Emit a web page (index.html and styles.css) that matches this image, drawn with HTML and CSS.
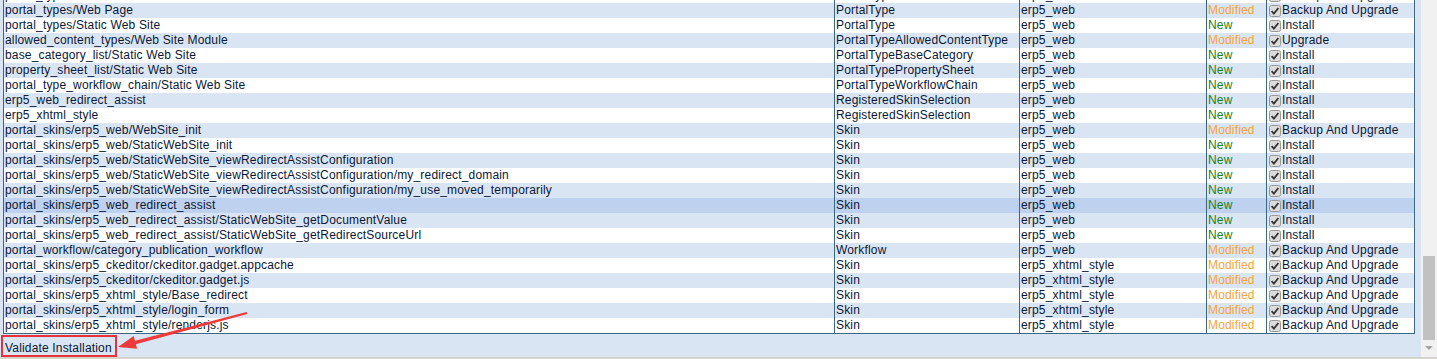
FILE: index.html
```html
<!DOCTYPE html>
<html>
<head>
<meta charset="utf-8">
<title>Business Template Installation</title>
<link rel="stylesheet" href="styles.css">
</head>
<body>
<div class="page">
  <div class="content">
    <table class="bt-table">
      <colgroup>
        <col class="c-path"><col class="c-type"><col class="c-bt"><col class="c-state"><col class="c-action">
      </colgroup>
      <tbody>
        <tr><td>portal_types/Web Site</td><td>PortalType</td><td>erp5_web</td><td class="mod">Modified</td><td><svg class="cb" viewBox="0 0 12 12"><rect x="0.5" y="0.5" width="11" height="11" rx="2"/><path d="M2.6 6.2 L4.9 8.6 L9.4 3"/></svg>Backup And Upgrade</td></tr>
        <tr class="alt"><td>portal_types/Web Page</td><td>PortalType</td><td>erp5_web</td><td class="mod">Modified</td><td><svg class="cb" viewBox="0 0 12 12"><rect x="0.5" y="0.5" width="11" height="11" rx="2"/><path d="M2.6 6.2 L4.9 8.6 L9.4 3"/></svg>Backup And Upgrade</td></tr>
        <tr><td>portal_types/Static Web Site</td><td>PortalType</td><td>erp5_web</td><td class="new">New</td><td><svg class="cb" viewBox="0 0 12 12"><rect x="0.5" y="0.5" width="11" height="11" rx="2"/><path d="M2.6 6.2 L4.9 8.6 L9.4 3"/></svg>Install</td></tr>
        <tr class="alt"><td>allowed_content_types/Web Site Module</td><td>PortalTypeAllowedContentType</td><td>erp5_web</td><td class="mod">Modified</td><td><svg class="cb" viewBox="0 0 12 12"><rect x="0.5" y="0.5" width="11" height="11" rx="2"/><path d="M2.6 6.2 L4.9 8.6 L9.4 3"/></svg>Upgrade</td></tr>
        <tr><td>base_category_list/Static Web Site</td><td>PortalTypeBaseCategory</td><td>erp5_web</td><td class="new">New</td><td><svg class="cb" viewBox="0 0 12 12"><rect x="0.5" y="0.5" width="11" height="11" rx="2"/><path d="M2.6 6.2 L4.9 8.6 L9.4 3"/></svg>Install</td></tr>
        <tr class="alt"><td>property_sheet_list/Static Web Site</td><td>PortalTypePropertySheet</td><td>erp5_web</td><td class="new">New</td><td><svg class="cb" viewBox="0 0 12 12"><rect x="0.5" y="0.5" width="11" height="11" rx="2"/><path d="M2.6 6.2 L4.9 8.6 L9.4 3"/></svg>Install</td></tr>
        <tr><td>portal_type_workflow_chain/Static Web Site</td><td>PortalTypeWorkflowChain</td><td>erp5_web</td><td class="new">New</td><td><svg class="cb" viewBox="0 0 12 12"><rect x="0.5" y="0.5" width="11" height="11" rx="2"/><path d="M2.6 6.2 L4.9 8.6 L9.4 3"/></svg>Install</td></tr>
        <tr class="alt"><td>erp5_web_redirect_assist</td><td>RegisteredSkinSelection</td><td>erp5_web</td><td class="new">New</td><td><svg class="cb" viewBox="0 0 12 12"><rect x="0.5" y="0.5" width="11" height="11" rx="2"/><path d="M2.6 6.2 L4.9 8.6 L9.4 3"/></svg>Install</td></tr>
        <tr><td>erp5_xhtml_style</td><td>RegisteredSkinSelection</td><td>erp5_web</td><td class="new">New</td><td><svg class="cb" viewBox="0 0 12 12"><rect x="0.5" y="0.5" width="11" height="11" rx="2"/><path d="M2.6 6.2 L4.9 8.6 L9.4 3"/></svg>Install</td></tr>
        <tr class="alt"><td>portal_skins/erp5_web/WebSite_init</td><td>Skin</td><td>erp5_web</td><td class="mod">Modified</td><td><svg class="cb" viewBox="0 0 12 12"><rect x="0.5" y="0.5" width="11" height="11" rx="2"/><path d="M2.6 6.2 L4.9 8.6 L9.4 3"/></svg>Backup And Upgrade</td></tr>
        <tr><td>portal_skins/erp5_web/StaticWebSite_init</td><td>Skin</td><td>erp5_web</td><td class="new">New</td><td><svg class="cb" viewBox="0 0 12 12"><rect x="0.5" y="0.5" width="11" height="11" rx="2"/><path d="M2.6 6.2 L4.9 8.6 L9.4 3"/></svg>Install</td></tr>
        <tr class="alt"><td>portal_skins/erp5_web/StaticWebSite_viewRedirectAssistConfiguration</td><td>Skin</td><td>erp5_web</td><td class="new">New</td><td><svg class="cb" viewBox="0 0 12 12"><rect x="0.5" y="0.5" width="11" height="11" rx="2"/><path d="M2.6 6.2 L4.9 8.6 L9.4 3"/></svg>Install</td></tr>
        <tr><td>portal_skins/erp5_web/StaticWebSite_viewRedirectAssistConfiguration/my_redirect_domain</td><td>Skin</td><td>erp5_web</td><td class="new">New</td><td><svg class="cb" viewBox="0 0 12 12"><rect x="0.5" y="0.5" width="11" height="11" rx="2"/><path d="M2.6 6.2 L4.9 8.6 L9.4 3"/></svg>Install</td></tr>
        <tr class="alt"><td>portal_skins/erp5_web/StaticWebSite_viewRedirectAssistConfiguration/my_use_moved_temporarily</td><td>Skin</td><td>erp5_web</td><td class="new">New</td><td><svg class="cb" viewBox="0 0 12 12"><rect x="0.5" y="0.5" width="11" height="11" rx="2"/><path d="M2.6 6.2 L4.9 8.6 L9.4 3"/></svg>Install</td></tr>
        <tr class="hover"><td>portal_skins/erp5_web_redirect_assist</td><td>Skin</td><td>erp5_web</td><td class="new">New</td><td><svg class="cb" viewBox="0 0 12 12"><rect x="0.5" y="0.5" width="11" height="11" rx="2"/><path d="M2.6 6.2 L4.9 8.6 L9.4 3"/></svg>Install</td></tr>
        <tr class="alt"><td>portal_skins/erp5_web_redirect_assist/StaticWebSite_getDocumentValue</td><td>Skin</td><td>erp5_web</td><td class="new">New</td><td><svg class="cb" viewBox="0 0 12 12"><rect x="0.5" y="0.5" width="11" height="11" rx="2"/><path d="M2.6 6.2 L4.9 8.6 L9.4 3"/></svg>Install</td></tr>
        <tr><td>portal_skins/erp5_web_redirect_assist/StaticWebSite_getRedirectSourceUrl</td><td>Skin</td><td>erp5_web</td><td class="new">New</td><td><svg class="cb" viewBox="0 0 12 12"><rect x="0.5" y="0.5" width="11" height="11" rx="2"/><path d="M2.6 6.2 L4.9 8.6 L9.4 3"/></svg>Install</td></tr>
        <tr class="alt"><td>portal_workflow/category_publication_workflow</td><td>Workflow</td><td>erp5_web</td><td class="mod">Modified</td><td><svg class="cb" viewBox="0 0 12 12"><rect x="0.5" y="0.5" width="11" height="11" rx="2"/><path d="M2.6 6.2 L4.9 8.6 L9.4 3"/></svg>Backup And Upgrade</td></tr>
        <tr><td>portal_skins/erp5_ckeditor/ckeditor.gadget.appcache</td><td>Skin</td><td>erp5_xhtml_style</td><td class="mod">Modified</td><td><svg class="cb" viewBox="0 0 12 12"><rect x="0.5" y="0.5" width="11" height="11" rx="2"/><path d="M2.6 6.2 L4.9 8.6 L9.4 3"/></svg>Backup And Upgrade</td></tr>
        <tr class="alt"><td>portal_skins/erp5_ckeditor/ckeditor.gadget.js</td><td>Skin</td><td>erp5_xhtml_style</td><td class="mod">Modified</td><td><svg class="cb" viewBox="0 0 12 12"><rect x="0.5" y="0.5" width="11" height="11" rx="2"/><path d="M2.6 6.2 L4.9 8.6 L9.4 3"/></svg>Backup And Upgrade</td></tr>
        <tr><td>portal_skins/erp5_xhtml_style/Base_redirect</td><td>Skin</td><td>erp5_xhtml_style</td><td class="mod">Modified</td><td><svg class="cb" viewBox="0 0 12 12"><rect x="0.5" y="0.5" width="11" height="11" rx="2"/><path d="M2.6 6.2 L4.9 8.6 L9.4 3"/></svg>Backup And Upgrade</td></tr>
        <tr class="alt"><td>portal_skins/erp5_xhtml_style/login_form</td><td>Skin</td><td>erp5_xhtml_style</td><td class="mod">Modified</td><td><svg class="cb" viewBox="0 0 12 12"><rect x="0.5" y="0.5" width="11" height="11" rx="2"/><path d="M2.6 6.2 L4.9 8.6 L9.4 3"/></svg>Backup And Upgrade</td></tr>
        <tr><td>portal_skins/erp5_xhtml_style/renderjs.js</td><td>Skin</td><td>erp5_xhtml_style</td><td class="mod">Modified</td><td><svg class="cb" viewBox="0 0 12 12"><rect x="0.5" y="0.5" width="11" height="11" rx="2"/><path d="M2.6 6.2 L4.9 8.6 L9.4 3"/></svg>Backup And Upgrade</td></tr>
      </tbody>
    </table>
    <div class="actions">
      <button class="validate" type="button">Validate Installation</button>
    </div>
  </div>
  <div class="scrollbar">
    <div class="thumb"></div>
    <div class="arrow-down"></div>
  </div>
</div>
<div class="bottom-edge"></div>
<svg class="annot-arrow" width="1437" height="359" viewBox="0 0 1437 359">
  <polygon points="246.7,312.0 247.3,314.0 132.9,344.9 132.1,341.5" />
  <polygon points="118,347 133.7,336.1 137.1,348.7" />
</svg>
</body>
</html>
```

FILE: styles.css
```css
html, body {
  margin: 0;
  padding: 0;
}

body {
  width: 1437px;
  height: 359px;
  overflow: hidden;
  background: #dae5f4;
  font-family: "Liberation Sans", Arial, sans-serif;
  font-size: 12px;
  letter-spacing: 0.17px;
  color: #0a1836;
  position: relative;
}

.page {
  display: flex;
  height: 357px;
}

.content {
  flex: 1;
  overflow: hidden;
}

.bt-table {
  border-collapse: collapse;
  table-layout: fixed;
  margin: -13px 0 0 3px;
  border: 1px solid #3a6882;
}

.c-path { width: 831px; }
.c-type { width: 185px; }
.c-bt { width: 187px; }
.c-state { width: 60px; }
.c-action { width: 148px; }

.bt-table td {
  height: 15px;
  line-height: 15px;
  padding: 0 0 0 1px;
  border-left: 1px solid #3a6882;
  border-right: 1px solid #3a6882;
  white-space: nowrap;
  overflow: hidden;
  background: #ffffff;
  vertical-align: top;
}

.bt-table tr.alt td {
  background: #dae5f4;
}

.bt-table tr.hover td {
  background: #bed1ee;
}

.bt-table td.mod {
  color: #f7a23a;
}

.bt-table td.new {
  color: #1b7f1b;
}

.cb {
  width: 12px;
  height: 12px;
  vertical-align: -3px;
  margin: 0 1px 0 1px;
}

.cb rect {
  fill: #dcdcdc;
  stroke: #989898;
  stroke-width: 1;
}

.cb path {
  fill: none;
  stroke: #333333;
  stroke-width: 1.8;
}

.actions {
  padding: 1px 0 0 1px;
}

.validate {
  display: block;
  margin: 0;
  padding: 4px 3px 0 2px;
  height: 22px;
  border: 2px solid #e8323a;
  background: transparent;
  font-family: "Liberation Sans", Arial, sans-serif;
  font-size: 12px;
  letter-spacing: 0.17px;
  line-height: 14px;
  color: #0a1836;
  text-align: left;
}

.scrollbar {
  width: 16px;
  background: #f1f1f1;
  display: flex;
  flex-direction: column;
  align-items: center;
  padding-top: 256px;
  box-sizing: border-box;
}

.thumb {
  width: 12px;
  height: 84px;
  background: #c1c1c1;
}

.arrow-down {
  margin-top: 6px;
  width: 0;
  height: 0;
  border-left: 4px solid transparent;
  border-right: 4px solid transparent;
  border-top: 4px solid #a3a3a3;
}

.bottom-edge {
  height: 2px;
  background: #d6d3cb;
}

.annot-arrow {
  position: absolute;
  left: 0;
  top: 0;
  pointer-events: none;
}

.annot-arrow polygon {
  fill: #ee3a3a;
}
```
